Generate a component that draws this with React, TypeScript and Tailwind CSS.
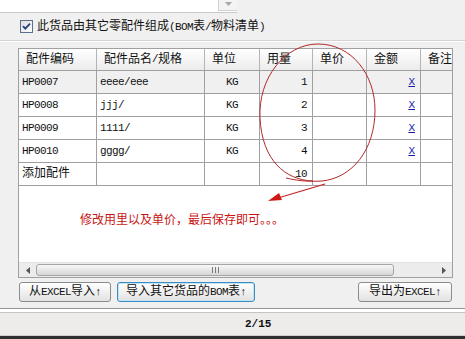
import React from "react";

type Row = {
  code: string;
  name: string;
  unit: string;
  qty: string;
  del: boolean;
};

const rows: Row[] = [
  { code: "HP0007", name: "eeee/eee", unit: "KG", qty: "1", del: true },
  { code: "HP0008", name: "jjj/", unit: "KG", qty: "2", del: true },
  { code: "HP0009", name: "1111/", unit: "KG", qty: "3", del: true },
  { code: "HP0010", name: "gggg/", unit: "KG", qty: "4", del: true },
  { code: "添加配件", name: "", unit: "", qty: "10", del: false },
];

const headers = ["配件编码", "配件品名/规格", "单位", "用量", "单价", "金额", "备注"];

/* half-width latin text, SimSun style */
function A({ children }: { children: React.ReactNode }) {
  return <span className="text-[11px] tracking-[-0.6px]">{children}</span>;
}

function CheckBox() {
  return (
    <svg width="13" height="13" viewBox="0 0 13 13" aria-hidden="true">
      <defs>
        <linearGradient id="cb" x1="0" y1="0" x2="1" y2="1">
          <stop offset="0" stopColor="#dcdcdc" />
          <stop offset="1" stopColor="#ffffff" />
        </linearGradient>
      </defs>
      <rect x="0.5" y="0.5" width="12" height="12" fill="url(#cb)" stroke="#5a6f8f" />
      <path d="M3 6.2 5.3 8.7 10 3.6" fill="none" stroke="#2a3f80" strokeWidth="1.8" />
    </svg>
  );
}

function Btn({ children, focus = false, w }: { children: React.ReactNode; focus?: boolean; w: string }) {
  return (
    <div
      className={`${w} h-[20px] flex items-center justify-center rounded-[3px] border bg-gradient-to-b from-white to-[#e2e2e2] text-[12px] text-[#111] ${
        focus ? "border-[#3c8cc4] shadow-[inset_0_0_0_1px_#bfe3f7]" : "border-[#8c8c8c]"
      }`}
    >
      {children}
    </div>
  );
}

function Annotation() {
  return (
    <svg className="absolute left-0 top-0 pointer-events-none" width="465" height="339" viewBox="0 0 465 339" aria-hidden="true">
      <path
        d="M313 181 C 285 180, 262 160, 260 118 C 258 78, 285 44, 318 44 C 352 44, 375 75, 375 110 C 375 150, 352 178, 322 181 C 305 182, 295 180, 286 178"
        fill="none"
        stroke="#b02a2a"
        strokeWidth="1"
      />
      <path d="M325 184 L 278 198" stroke="#c82020" strokeWidth="1.2" />
      <polygon points="268,201 279,193 282,200" fill="#d01818" />
    </svg>
  );
}

export default function App() {
  return (
    <div className="relative w-[465px] h-[339px] overflow-hidden bg-[#f0f0f0] flex flex-col font-['Liberation_Mono','Noto_Sans_CJK_SC',monospace] text-[12px] text-[#111]">
      {/* top text box edge */}
      <div className="h-[13px] flex">
        <div className="w-[237px] h-[13px] bg-white border-b border-[#c8c8c8] flex justify-end">
          <div className="w-[19px] h-[11px] border-l border-b border-[#d0d0d0] bg-[#f4f4f4] flex justify-center pt-[2px]">
            <svg width="7" height="4" viewBox="0 0 7 4" aria-hidden="true">
              <path d="M0 0h7L3.5 4z" fill="#a8a8a8" />
            </svg>
          </div>
        </div>
      </div>

      {/* checkbox */}
      <div className="h-[27px] flex items-center pl-[20px] gap-[4px]">
        <CheckBox />
        <span className="whitespace-nowrap">
          此货品由其它零配件组成<A>(BOM</A>表<A>/</A>物料清单<A>)</A>
        </span>
      </div>

      <div className="h-[2px] border-t border-[#d3d3d3] border-b border-b-white" />

      {/* grid panel */}
      <div className="ml-[18px] mt-[6px] w-[435px] h-[230px] border border-[#a0a0a0] bg-white flex flex-col">
        <div className="grid grid-cols-[78px_108px_55px_53px_54px_54px_1fr] h-[22px] border-b border-[#a0a0a0] bg-gradient-to-b from-white to-[#ececec]">
          {headers.map((h, i) => (
            <div
              key={h}
              className={`flex items-center pl-[7px] whitespace-nowrap overflow-hidden ${i < 6 ? "border-r border-[#b4b4b4]" : ""}`}
            >
              {h.split("/").length > 1 ? (
                <>
                  {h.split("/")[0]}
                  <A>/</A>
                  {h.split("/")[1]}
                </>
              ) : (
                h
              )}
            </div>
          ))}
        </div>

        {rows.map((r, idx) => (
          <div
            key={r.code}
            className={`grid grid-cols-[78px_108px_55px_53px_54px_54px_1fr] h-[23px] border-b border-[#a0a0a0] ${
              idx === 0 ? "bg-[#f0f0f0]" : "bg-white"
            }`}
          >
            <div className="flex items-center pl-[3px] border-r border-[#a0a0a0] whitespace-nowrap">
              {r.del ? <A>{r.code}</A> : r.code}
            </div>
            <div className="flex items-center pl-[3px] border-r border-[#a0a0a0]">
              <A>{r.name}</A>
            </div>
            <div className="flex items-center justify-center border-r border-[#a0a0a0]">
              <A>{r.unit}</A>
            </div>
            <div className="flex items-center justify-end pr-[5px] border-r border-[#a0a0a0]">
              <A>{r.qty}</A>
            </div>
            <div className="border-r border-[#a0a0a0]" />
            <div className="flex items-center justify-end pr-[5px] border-r border-[#a0a0a0]">
              {r.del && (
                <span className="text-[11px] text-[#1a1aa8] underline">X</span>
              )}
            </div>
            <div />
          </div>
        ))}

        {/* empty area with note */}
        <div className="flex-1 pl-[61px] pt-[24px]">
          <span className="text-[12px] text-[#c81414] font-['Noto_Sans_CJK_SC',sans-serif] whitespace-nowrap">
            修改用里以及单价，最后保存即可。。。
          </span>
        </div>

        {/* horizontal scrollbar */}
        <div className="h-[15px] flex bg-[#ececec] border-t border-[#e2e2e2]">
          <div className="w-[17px] flex items-center justify-center">
            <svg width="4" height="7" viewBox="0 0 4 7" aria-hidden="true">
              <path d="M4 0v7L0 3.5z" fill="#555" />
            </svg>
          </div>
          <div className="flex-1 py-[1px]">
            <div className="w-[358px] h-full rounded-[3px] border border-[#a6a6a6] bg-gradient-to-b from-[#f8f8f8] to-[#d6d6d6] flex items-center justify-center gap-[2px]">
              <div className="w-[1px] h-[6px] bg-[#7a7a7a]" />
              <div className="w-[1px] h-[6px] bg-[#7a7a7a]" />
              <div className="w-[1px] h-[6px] bg-[#7a7a7a]" />
            </div>
          </div>
          <div className="w-[17px] flex items-center justify-center">
            <svg width="4" height="7" viewBox="0 0 4 7" aria-hidden="true">
              <path d="M0 0v7L4 3.5z" fill="#555" />
            </svg>
          </div>
        </div>
      </div>

      {/* buttons */}
      <div className="mt-[4px] flex pl-[19px] pr-[13px]">
        <Btn w="w-[92px]">
          从<A>EXCEL</A>导入<A>↑</A>
        </Btn>
        <div className="ml-[6px]">
          <Btn w="w-[138px]" focus>
            导入其它货品的<A>BOM</A>表<A>↑</A>
          </Btn>
        </div>
        <div className="ml-auto">
          <Btn w="w-[94px]">
            导出为<A>EXCEL</A>
            <A>↑</A>
          </Btn>
        </div>
      </div>

      {/* status bar */}
      <div className="mt-[6px] h-[5px] border-t border-[#969696] bg-white border-b border-b-[#c4c4c4]" />
      <div className="h-[22px] bg-[#eeebeb] flex items-center pl-[245px]">
        <span className="text-[11px] font-bold">2/15</span>
      </div>
      <div className="h-[1px] bg-[#cfcfcf]" />
      <div className="flex-1 bg-[#2e2e2e]" />

      <Annotation />
    </div>
  );
}
